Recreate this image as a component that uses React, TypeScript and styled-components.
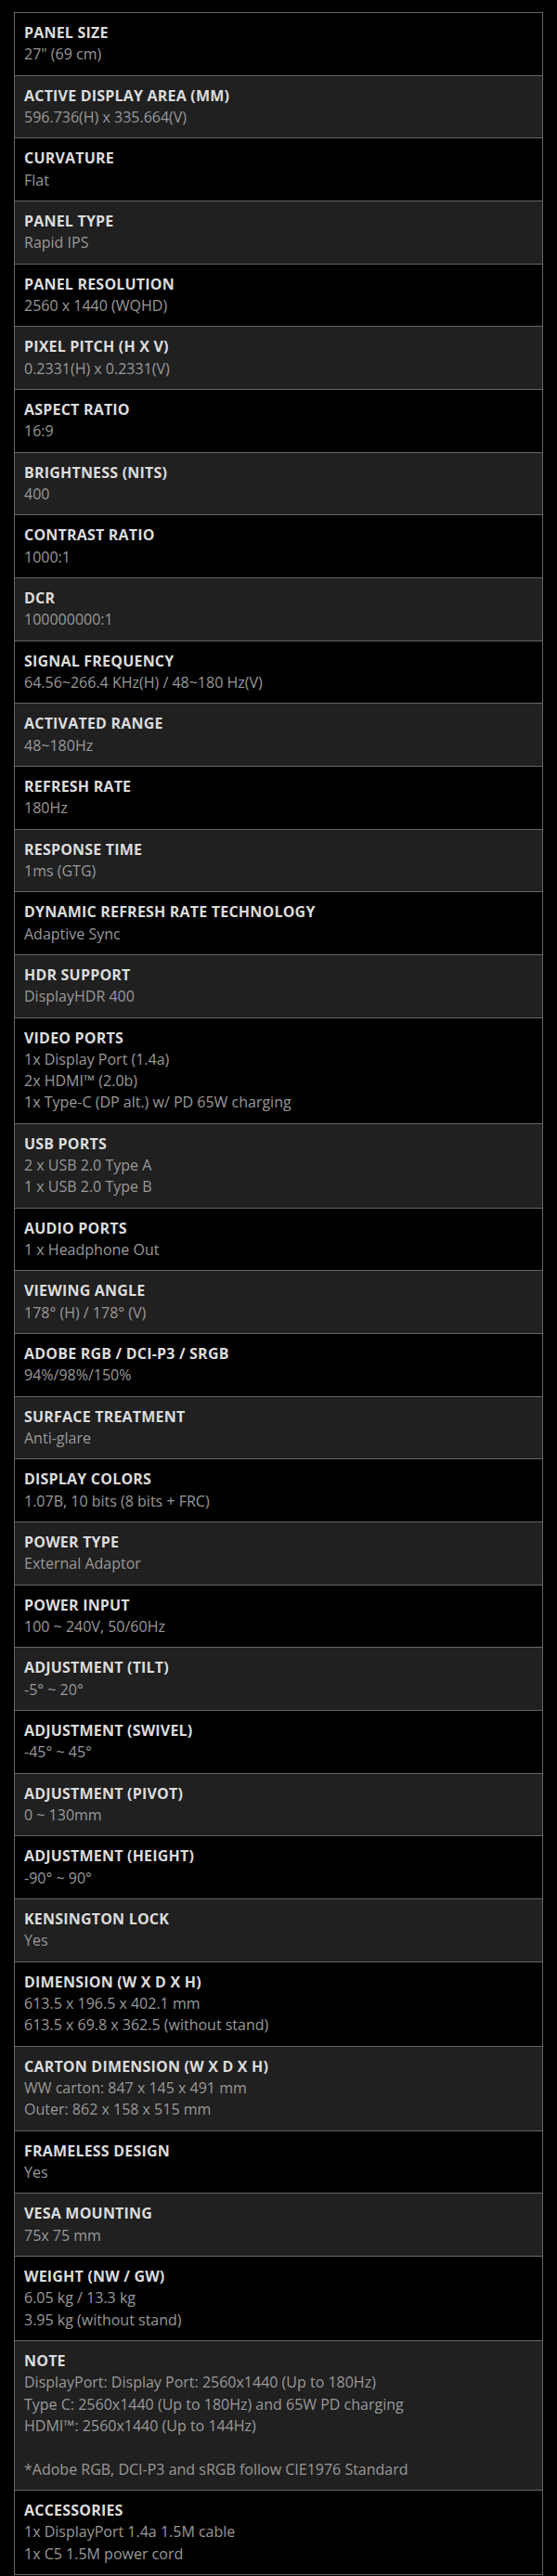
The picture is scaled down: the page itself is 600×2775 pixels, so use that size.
import React from "react";
import styled, { createGlobalStyle } from "styled-components";

const Global = createGlobalStyle`
  html, body {
    margin: 0;
    padding: 0;
    background: #000;
  }
`;

const Page = styled.div`
  padding: 13px 15px 0 15px;
  background: #000;
  font-family: "Open Sans", "Noto Sans", sans-serif;
`;

const Table = styled.div`
  border: 1px solid #666;
  border-bottom: none;
  display: flex;
  flex-direction: column;
`;

const Row = styled.div<{ $alt: boolean }>`
  background: ${(p) => (p.$alt ? "#202020" : "#000")};
  border-bottom: 1px solid #666;
  padding: 10px 10px;
  line-height: 23.33px;
`;

const Title = styled.div`
  color: #dcdcdc;
  font-weight: 700;
  font-size: 16px;
  letter-spacing: 0.2px;
`;

const Value = styled.div`
  color: #999;
  font-size: 16px;
  min-height: 23.33px;
`;

const specs: [string, string[]][] = [
  ["PANEL SIZE", ['27" (69 cm)']],
  ["ACTIVE DISPLAY AREA (MM)", ["596.736(H) x 335.664(V)"]],
  ["CURVATURE", ["Flat"]],
  ["PANEL TYPE", ["Rapid IPS"]],
  ["PANEL RESOLUTION", ["2560 x 1440 (WQHD)"]],
  ["PIXEL PITCH (H X V)", ["0.2331(H) x 0.2331(V)"]],
  ["ASPECT RATIO", ["16:9"]],
  ["BRIGHTNESS (NITS)", ["400"]],
  ["CONTRAST RATIO", ["1000:1"]],
  ["DCR", ["100000000:1"]],
  ["SIGNAL FREQUENCY", ["64.56~266.4 KHz(H) / 48~180 Hz(V)"]],
  ["ACTIVATED RANGE", ["48~180Hz"]],
  ["REFRESH RATE", ["180Hz"]],
  ["RESPONSE TIME", ["1ms (GTG)"]],
  ["DYNAMIC REFRESH RATE TECHNOLOGY", ["Adaptive Sync"]],
  ["HDR SUPPORT", ["DisplayHDR 400"]],
  [
    "VIDEO PORTS",
    ["1x Display Port (1.4a)", "2x HDMI™ (2.0b)", "1x Type-C (DP alt.) w/ PD 65W charging"],
  ],
  ["USB PORTS", ["2 x USB 2.0 Type A", "1 x USB 2.0 Type B"]],
  ["AUDIO PORTS", ["1 x Headphone Out"]],
  ["VIEWING ANGLE", ["178° (H) / 178° (V)"]],
  ["ADOBE RGB / DCI-P3 / SRGB", ["94%/98%/150%"]],
  ["SURFACE TREATMENT", ["Anti-glare"]],
  ["DISPLAY COLORS", ["1.07B, 10 bits (8 bits + FRC)"]],
  ["POWER TYPE", ["External Adaptor"]],
  ["POWER INPUT", ["100 ~ 240V, 50/60Hz"]],
  ["ADJUSTMENT (TILT)", ["-5° ~ 20°"]],
  ["ADJUSTMENT (SWIVEL)", ["-45° ~ 45°"]],
  ["ADJUSTMENT (PIVOT)", ["0 ~ 130mm"]],
  ["ADJUSTMENT (HEIGHT)", ["-90° ~ 90°"]],
  ["KENSINGTON LOCK", ["Yes"]],
  ["DIMENSION (W X D X H)", ["613.5 x 196.5 x 402.1 mm", "613.5 x 69.8 x 362.5 (without stand)"]],
  ["CARTON DIMENSION (W X D X H)", ["WW carton: 847 x 145 x 491 mm", "Outer: 862 x 158 x 515 mm"]],
  ["FRAMELESS DESIGN", ["Yes"]],
  ["VESA MOUNTING", ["75x 75 mm"]],
  ["WEIGHT (NW / GW)", ["6.05 kg / 13.3 kg", "3.95 kg (without stand)"]],
  [
    "NOTE",
    [
      "DisplayPort: Display Port: 2560x1440 (Up to 180Hz)",
      "Type C: 2560x1440 (Up to 180Hz) and 65W PD charging",
      "HDMI™: 2560x1440 (Up to 144Hz)",
      "",
      "*Adobe RGB, DCI-P3 and sRGB follow CIE1976 Standard",
    ],
  ],
  ["ACCESSORIES", ["1x DisplayPort 1.4a 1.5M cable", "1x C5 1.5M power cord"]],
];

export default function App() {
  return (
    <>
      <Global />
      <Page>
        <Table>
          {specs.map(([title, values], i) => (
            <Row key={title} $alt={i % 2 === 1}>
              <Title>{title}</Title>
              {values.map((v, j) => (
                <Value key={j}>{v}</Value>
              ))}
            </Row>
          ))}
        </Table>
      </Page>
    </>
  );
}
